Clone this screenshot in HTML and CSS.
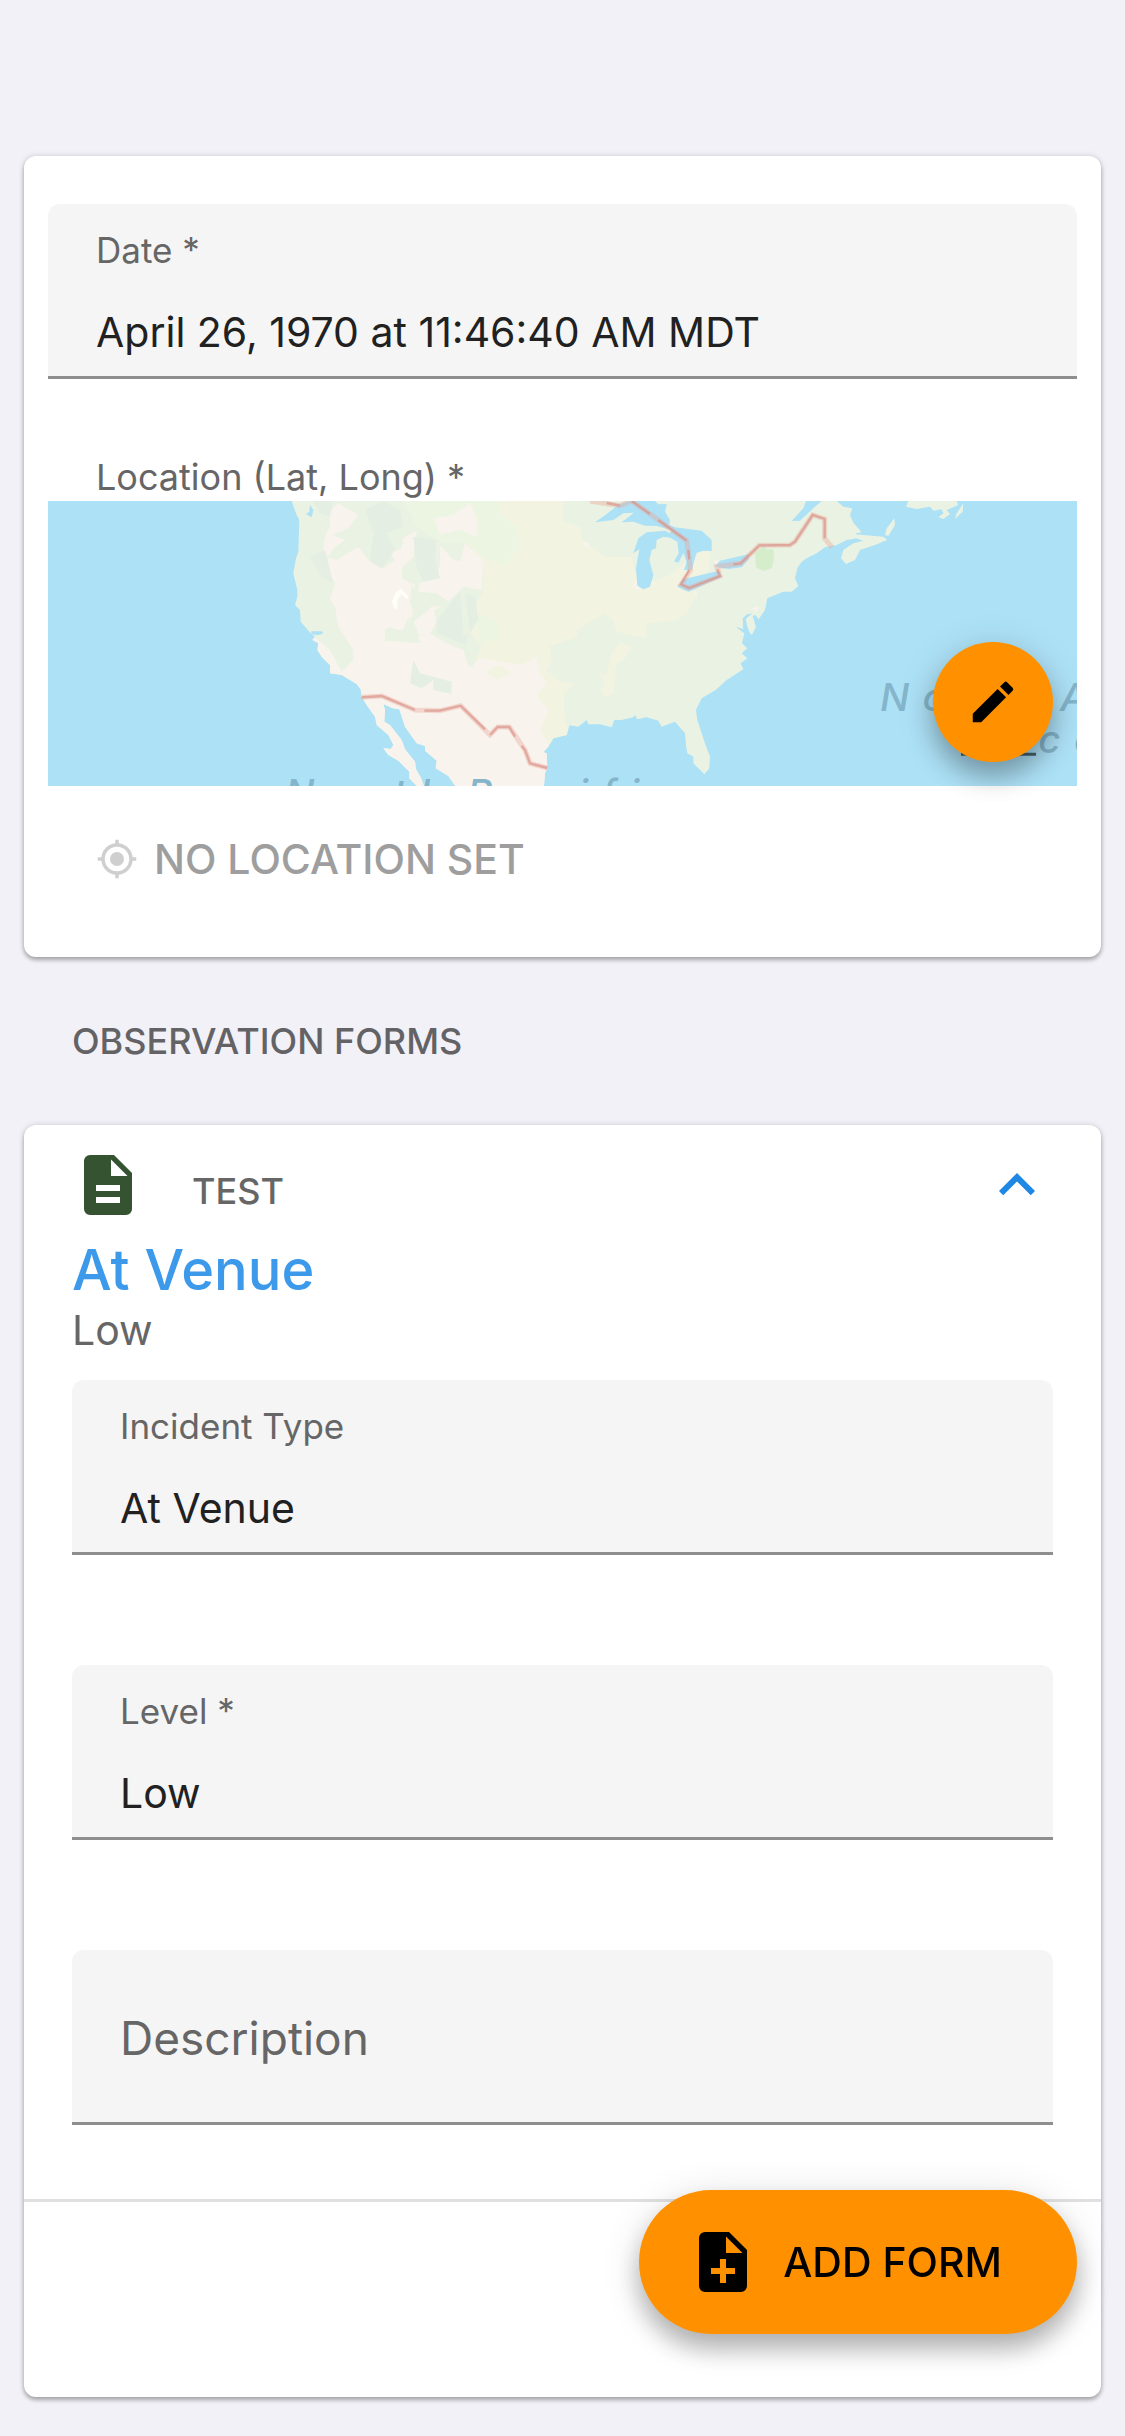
FILE: index.html
```html
<!DOCTYPE html>
<html lang="en">
<head>
<meta charset="utf-8">
<meta name="viewport" content="width=device-width, initial-scale=1">
<title>Observation</title>
<link rel="stylesheet" href="styles.css">
</head>
<body>
<main class="page">
  <section class="card card-common">
    <div class="field">
      <label class="field-label" for="date">Date *</label>
      <input class="field-input" id="date" type="text" value="April 26, 1970 at 11:46:40 AM MDT">
    </div>
    <div class="location">
      <h2 class="location-label">Location (Lat, Long) *</h2>
      <div class="map">
        <svg class="map-canvas" viewBox="-666 33 3087 855" preserveAspectRatio="xMidYMid slice" role="img" aria-label="Map of North America">
          <defs>
            <clipPath id="land">
              <path id="coast" d="M65 33L75 62 80 75 88 90 85 185 78 205 70 250 82 300 82 320 75 345 90 360 92 395 122 430 135 440 127 450 145 460 142 480 155 500 180 525 180 550 215 555 240 570 260 582 272 598 275 620 290 645 315 680 320 705 355 735 370 765 362 777 340 775 355 795 385 812 418 845 418 865 440 888 462 888 452 862 438 838 435 815 405 778 395 750 360 705 343 695 345 660 340 642 368 655 388 658 405 710 440 760 465 768 465 782 500 812 497 835 535 858 556 888 822 888 825 850 832 835 830 790 820 787 835 770 850 745 890 735 898 708 898 706 925 710 950 690 955 703 990 703 1025 712 1033 690 1055 690 1090 682 1095 675 1102 688 1130 682 1165 692 1175 710 1215 695 1245 730 1248 765 1252 790 1270 800 1270 820 1303 853 1318 835 1320 800 1305 760 1282 690 1278 660 1295 625 1337 600 1370 570 1420 538 1412 520 1432 505 1415 490 1432 475 1416 460 1423 430 1397 410 1420 418 1418 385 1432 373 1450 370 1458 362 1440 376 1427 387 1432 410 1440 430 1446 435 1458 410 1448 378 1456 375 1466 388 1485 360 1492 325 1540 305 1565 305 1585 288 1575 265 1582 235 1595 215 1610 205 1640 190 1665 172 1700 165 1730 150 1760 145 1758 130 1775 127 1750 98 1740 75 1747 55 1720 50 1700 33Z"/>
            </clipPath>
          </defs>
          <rect class="water" x="-1500" y="-1000" width="6000" height="3000"/>
          <use class="forest" href="#coast"/>
          <g clip-path="url(#land)">
            <path class="prairie" d="M540 33H880V95L930 110 935 145 1000 200 1085 200 1105 290 1200 255 1280 190 1320 180 1318 240 1230 300 1280 310 1250 370 1220 390 1130 400 1128 445 1040 425 1030 390 1000 370 920 420 925 440 840 468 845 520 830 540 870 575 905 585 880 615 885 690 900 740 820 770 780 700 720 520 610 510 600 380 640 300 640 210 560 130Z"/>
            <path class="meadow" d="M400 33H685L690 70 740 110 750 170 705 225 640 205 600 160 520 160 440 110ZM620 370L680 390 690 440 630 465Z"/>
            <path class="desert" d="M205 40L265 75 235 115 185 135 225 150 190 175 175 200 200 210 265 170 300 215 340 235 375 210 360 190 395 175 400 145 440 120 430 200 395 235 395 265 435 285 420 330 430 370 400 420 345 415 345 450 395 455 450 460 440 430 485 390 500 395 480 430 540 465 580 480 595 530 630 505 690 515 750 525 800 500 808 550 830 580 800 615 835 660 810 720 840 770 835 888H-50L120 430 180 480 215 545 250 510 250 480 205 410 195 350 180 330 195 280 165 230 178 200 158 190 165 140 180 110 180 60ZM490 85L550 75 600 40 622 90 620 140 570 120 510 135ZM510 165L545 205 570 215 585 160 640 210 635 300 580 290 535 335 500 310 445 305 450 280 490 260 510 230ZM470 345L515 350 480 365ZM430 395L490 350 500 400 445 425Z"/>
            <path class="hills" d="M285 60L340 33 390 60 400 110 350 130 375 180 335 235 300 215 310 130ZM430 140L500 150 495 200 510 265 460 275 440 235ZM500 390L570 305 615 320 625 390 600 430 600 470 500 430ZM430 510L450 550 545 575 545 612 490 600 490 570 455 595 420 580ZM120 200L165 180 190 280 155 260ZM130 33H190L180 80 150 70Z"/>
            <path class="forest" d="M345 420L360 410 395 430 415 380 430 425 450 435 430 460 395 450 345 455ZM425 280L445 330 510 325 500 345 440 370 420 340ZM570 310L585 295 600 430 635 470 605 535 585 480 595 430 580 440Z"/>
            <path class="prairie" d="M1025 490L1050 455 1085 475 1060 510 1040 520 1030 610 1005 622 990 600 1005 580 985 545 1010 555ZM840 570L910 580 870 625 840 600ZM645 545L690 525 725 550 680 570Z"/>
            <path class="salt" d="M370 325L378 305 395 297 415 320 410 328 395 312 382 330 382 355 375 357 365 335Z"/>
            <path class="park" d="M1455 190L1480 168 1490 178 1510 178 1512 205 1505 235 1482 243 1458 232Z"/>
            <path class="desert" d="M1088 285L1100 270 1110 295 1098 300ZM940 160L955 155 960 168 945 172ZM1445 355L1468 348 1460 365ZM1330 215L1345 207 1340 222ZM1270 300L1282 310 1280 325Z"/>
          </g>
          <path class="water" d="M975 97L1010 72 1045 45 1075 33H1155L1165 43 1190 42 1185 65 1200 90 1198 105 1215 112 1295 122 1325 150 1325 183 1300 182 1280 188 1275 205 1265 240H1242L1250 215 1240 190 1225 218 1212 214 1226 190 1222 155 1200 143 1180 140 1160 150 1158 175 1145 180 1138 210 1150 255 1140 290 1120 298 1102 287 1098 235 1108 178 1090 190 1105 145 1130 127 1185 122 1200 130 1205 120 1160 108 1125 107 1090 95 1055 97 1092 68 1060 70 1030 90ZM1222 290L1240 268 1280 258 1345 243 1355 260 1290 290 1255 305ZM1335 230L1350 212 1435 193 1437 207 1415 232 1375 237ZM1565 93L1600 55 1608 33H1655L1630 55 1590 92ZM1700 33H1745L1735 42ZM120 45L130 60 125 82 108 72 118 65ZM124 424L155 424 160 430 145 435 124 433Z"/>
          <path class="forest" d="M1755 133L1840 140 1852 150 1815 165 1770 180 1755 210 1728 222 1713 205 1720 180 1750 160 1780 152 1758 145ZM1845 135L1850 115 1873 85 1875 105 1855 138ZM1908 50L1915 33H2060L2065 45 2030 60 2040 72 2020 87 2005 82 2020 70 2015 58 1990 62 1980 50 1940 57ZM2080 40L2078 65 2055 87 2060 70Z"/>
          <path class="border-glow" d="M275 622L335 618 435 660 510 662 572 647 660 735 683 711 718 711 765 780 780 820 832 834M960 33L1050 47 1085 33 1140 72 1250 152 1262 240 1233 283 1257 294 1350 258 1340 230 1412 220 1468 166 1560 165 1575 155 1628 75 1664 87 1664 145 1686 172"/>
          <path class="border-line" d="M275 622L335 618 435 660M463 662L510 662 572 647 645 718M660 735L683 711 718 711 735 740M755 767L765 780 780 820 832 834M1010 39L1050 47M1085 33L1140 72M1165 90L1250 152M1255 180L1258 208M1258 240L1233 283 1257 294 1350 258 1342 238M1390 223L1412 220 1468 166 1560 165 1575 155 1628 75 1664 87 1664 145"/>
          <text class="ocean-name" y="950"><tspan x="46">North</tspan> <tspan x="592">Pacific</tspan></text>
          <text class="ocean-name" y="662"><tspan x="1830">North</tspan> <tspan x="2370">Atlantic</tspan></text>
          <text class="ocean-name" x="2176" y="788">Ocean</text>
          <path class="legal-line" d="M2073 793H2298"/>
        </svg>
        <button class="fab" type="button" aria-label="Edit location">
          <svg class="fab-icon" viewBox="0 0 24 24" aria-hidden="true"><path d="M3 17.250V21h3.750L17.810 9.940l-3.750-3.750L3 17.250zM20.710 7.040a1 1 0 0 0 0-1.410l-2.340-2.340a1 1 0 0 0-1.410 0l-1.830 1.830 3.750 3.750 1.830-1.830z"/></svg>
        </button>
      </div>
      <button class="location-value" type="button" disabled>
        <svg class="gps-icon" viewBox="0 0 24 24" aria-hidden="true"><path d="M12 8a4 4 0 1 0 0 8 4 4 0 0 0 0-8zm8.940 3A9 9 0 0 0 13 3.060V1h-2v2.060A9 9 0 0 0 3.060 11H1v2h2.060A9 9 0 0 0 11 20.940V23h2v-2.060A9 9 0 0 0 20.940 13H23v-2h-2.060zM12 19a7 7 0 1 1 0-14 7 7 0 0 1 0 14z"/></svg>
        NO LOCATION SET
      </button>
    </div>
  </section>

  <h2 class="section-title">OBSERVATION FORMS</h2>

  <section class="card card-form">
    <div class="form-body">
      <header class="form-header">
        <svg class="icon form-icon" viewBox="0 0 24 24" aria-hidden="true"><path d="M14 2H6a2 2 0 0 0-2 2v16a2 2 0 0 0 2 2h12a2 2 0 0 0 2-2V8l-6-6zm2 16H8v-2h8v2zm0-4H8v-2h8v2zm-3-5V3.500L18.500 9H13z"/></svg>
        <span class="form-name">TEST</span>
        <button class="collapse" type="button" aria-label="Collapse form">
          <svg class="icon" viewBox="0 0 24 24" aria-hidden="true"><path d="M7.410 15.410L12 10.830l4.590 4.580L18 14l-6-6-6 6z"/></svg>
        </button>
      </header>
      <h3 class="form-primary">At Venue</h3>
      <p class="form-secondary">Low</p>
      <div class="fields">
        <div class="field">
          <label class="field-label" for="incident">Incident Type</label>
          <input class="field-input" id="incident" type="text" value="At Venue">
        </div>
        <div class="field">
          <label class="field-label" for="level">Level *</label>
          <input class="field-input" id="level" type="text" value="Low">
        </div>
        <div class="field field-empty">
          <input class="field-input" type="text" placeholder="Description" aria-label="Description">
        </div>
      </div>
    </div>
    <footer class="form-footer"></footer>
  </section>
</main>

<button class="add-form" type="button">
  <svg class="icon" viewBox="0 0 24 24" aria-hidden="true"><path d="M14 2H6a2 2 0 0 0-2 2v16a2 2 0 0 0 2 2h12a2 2 0 0 0 2-2V8l-6-6zm2 14h-3v3h-2v-3H8v-2h3v-3h2v3h3v2zm-3-7V3.500L18.500 9H13z"/></svg>
  ADD FORM
</button>
</body>
</html>
```
FILE: styles.css
```css
* {
  box-sizing: border-box;
}

body {
  margin: 0;
  background: #f2f1f7;
  color: #212121;
  font-family: Inter, "Liberation Sans", sans-serif;
  font-size: 41px;
  line-height: 48px;
}

h2,
h3,
p {
  margin: 0;
}

button,
input {
  margin: 0;
  padding: 0;
  border: 0;
  background: none;
  color: inherit;
  font: inherit;
}

.page {
  padding: 156px 24px 39px;
}

.card {
  border-radius: 12px;
  background: #fff;
  box-shadow: 0 3px 4px rgba(0, 0, 0, 0.28), 0 0 6px rgba(0, 0, 0, 0.14);
}

.card-common {
  padding: 48px 24px 74px;
}

.field {
  display: flex;
  flex-direction: column;
  gap: 36px;
  padding: 24px 48px 20px;
  border-bottom: 3px solid #8e8e8e;
  border-radius: 12px 12px 0 0;
  background: #f5f5f5;
}

.field-label {
  color: #666;
  font-size: 35px;
  line-height: 44px;
}

.field-input {
  width: 100%;
  height: 48px;
  outline: 0;
}

.field-empty {
  padding: 58px 48px 54px;
}

.field-empty .field-input {
  height: 60px;
  font-size: 46px;
}

.field-input::placeholder {
  color: #666;
  opacity: 1;
}

.location {
  margin-top: 74px;
}

.location-label {
  padding-left: 48px;
  color: #666;
  font-size: 36px;
  font-weight: 400;
}

.map {
  position: relative;
}

.map-canvas {
  display: block;
  width: 100%;
  height: 285px;
}

.water { fill: #ade1f6; }
.forest { fill: #e9f2e3; }
.prairie { fill: #f2f4e1; }
.meadow { fill: #ebf5e2; }
.desert { fill: #f8f4ed; }
.hills { fill: #e5eee3; }
.salt { fill: #fffff8; }
.park { fill: #d6edcb; }

.border-glow {
  fill: none;
  stroke: #e9a79c;
  stroke-opacity: 0.4;
  stroke-width: 15;
}

.border-line {
  fill: none;
  stroke: #d98f86;
  stroke-opacity: 0.65;
  stroke-width: 7;
}

.ocean-name {
  fill: #84b5cb;
  font-size: 116px;
  font-style: italic;
  font-weight: 500;
  letter-spacing: 40px;
}

.legal-line {
  stroke: #46616e;
  stroke-width: 9;
}

.fab {
  position: absolute;
  right: 24px;
  bottom: 24px;
  display: grid;
  place-items: center;
  width: 120px;
  height: 120px;
  border-radius: 50%;
}

.fab,
.add-form {
  background: #ff9100;
  box-shadow: 0 15px 24px rgba(0, 0, 0, 0.26), 0 6px 42px rgba(0, 0, 0, 0.12);
  color: #000;
}

.fab-icon {
  width: 54px;
  height: 54px;
}

.location-value {
  display: flex;
  align-items: center;
  gap: 16px;
  margin-top: 49px;
  padding-left: 48px;
  color: #9e9e9e;
  font-weight: 500;
}

.gps-icon {
  width: 42px;
  height: 42px;
  fill: #cfcfcf;
}

.section-title {
  padding: 62px 48px;
  color: #636366;
  font-size: 36px;
  font-weight: 500;
  line-height: 44px;
}

.form-body {
  padding: 24px 48px 74px;
}

.icon {
  display: block;
  width: 72px;
  height: 72px;
  fill: currentColor;
}

.form-header {
  display: flex;
  align-items: flex-end;
  gap: 48px;
}

.form-icon {
  color: #355231;
}

.form-name {
  color: #666;
  font-size: 36px;
  font-weight: 500;
  line-height: 60px;
}

.collapse {
  margin-left: auto;
  color: #1e88e5;
}

.form-primary {
  margin-top: 13px;
  color: #3d99ea;
  font-size: 56px;
  font-weight: 500;
  line-height: 72px;
}

.form-secondary {
  color: #666;
}

.fields {
  display: flex;
  flex-direction: column;
  gap: 110px;
  margin-top: 26px;
}

.form-footer {
  height: 198px;
  border-top: 3px solid #e0e0e0;
}

.add-form {
  position: fixed;
  right: 48px;
  bottom: 102px;
  display: flex;
  align-items: center;
  gap: 24px;
  height: 144px;
  padding: 0 75px 0 48px;
  border-radius: 72px;
  font-weight: 500;
}
```
